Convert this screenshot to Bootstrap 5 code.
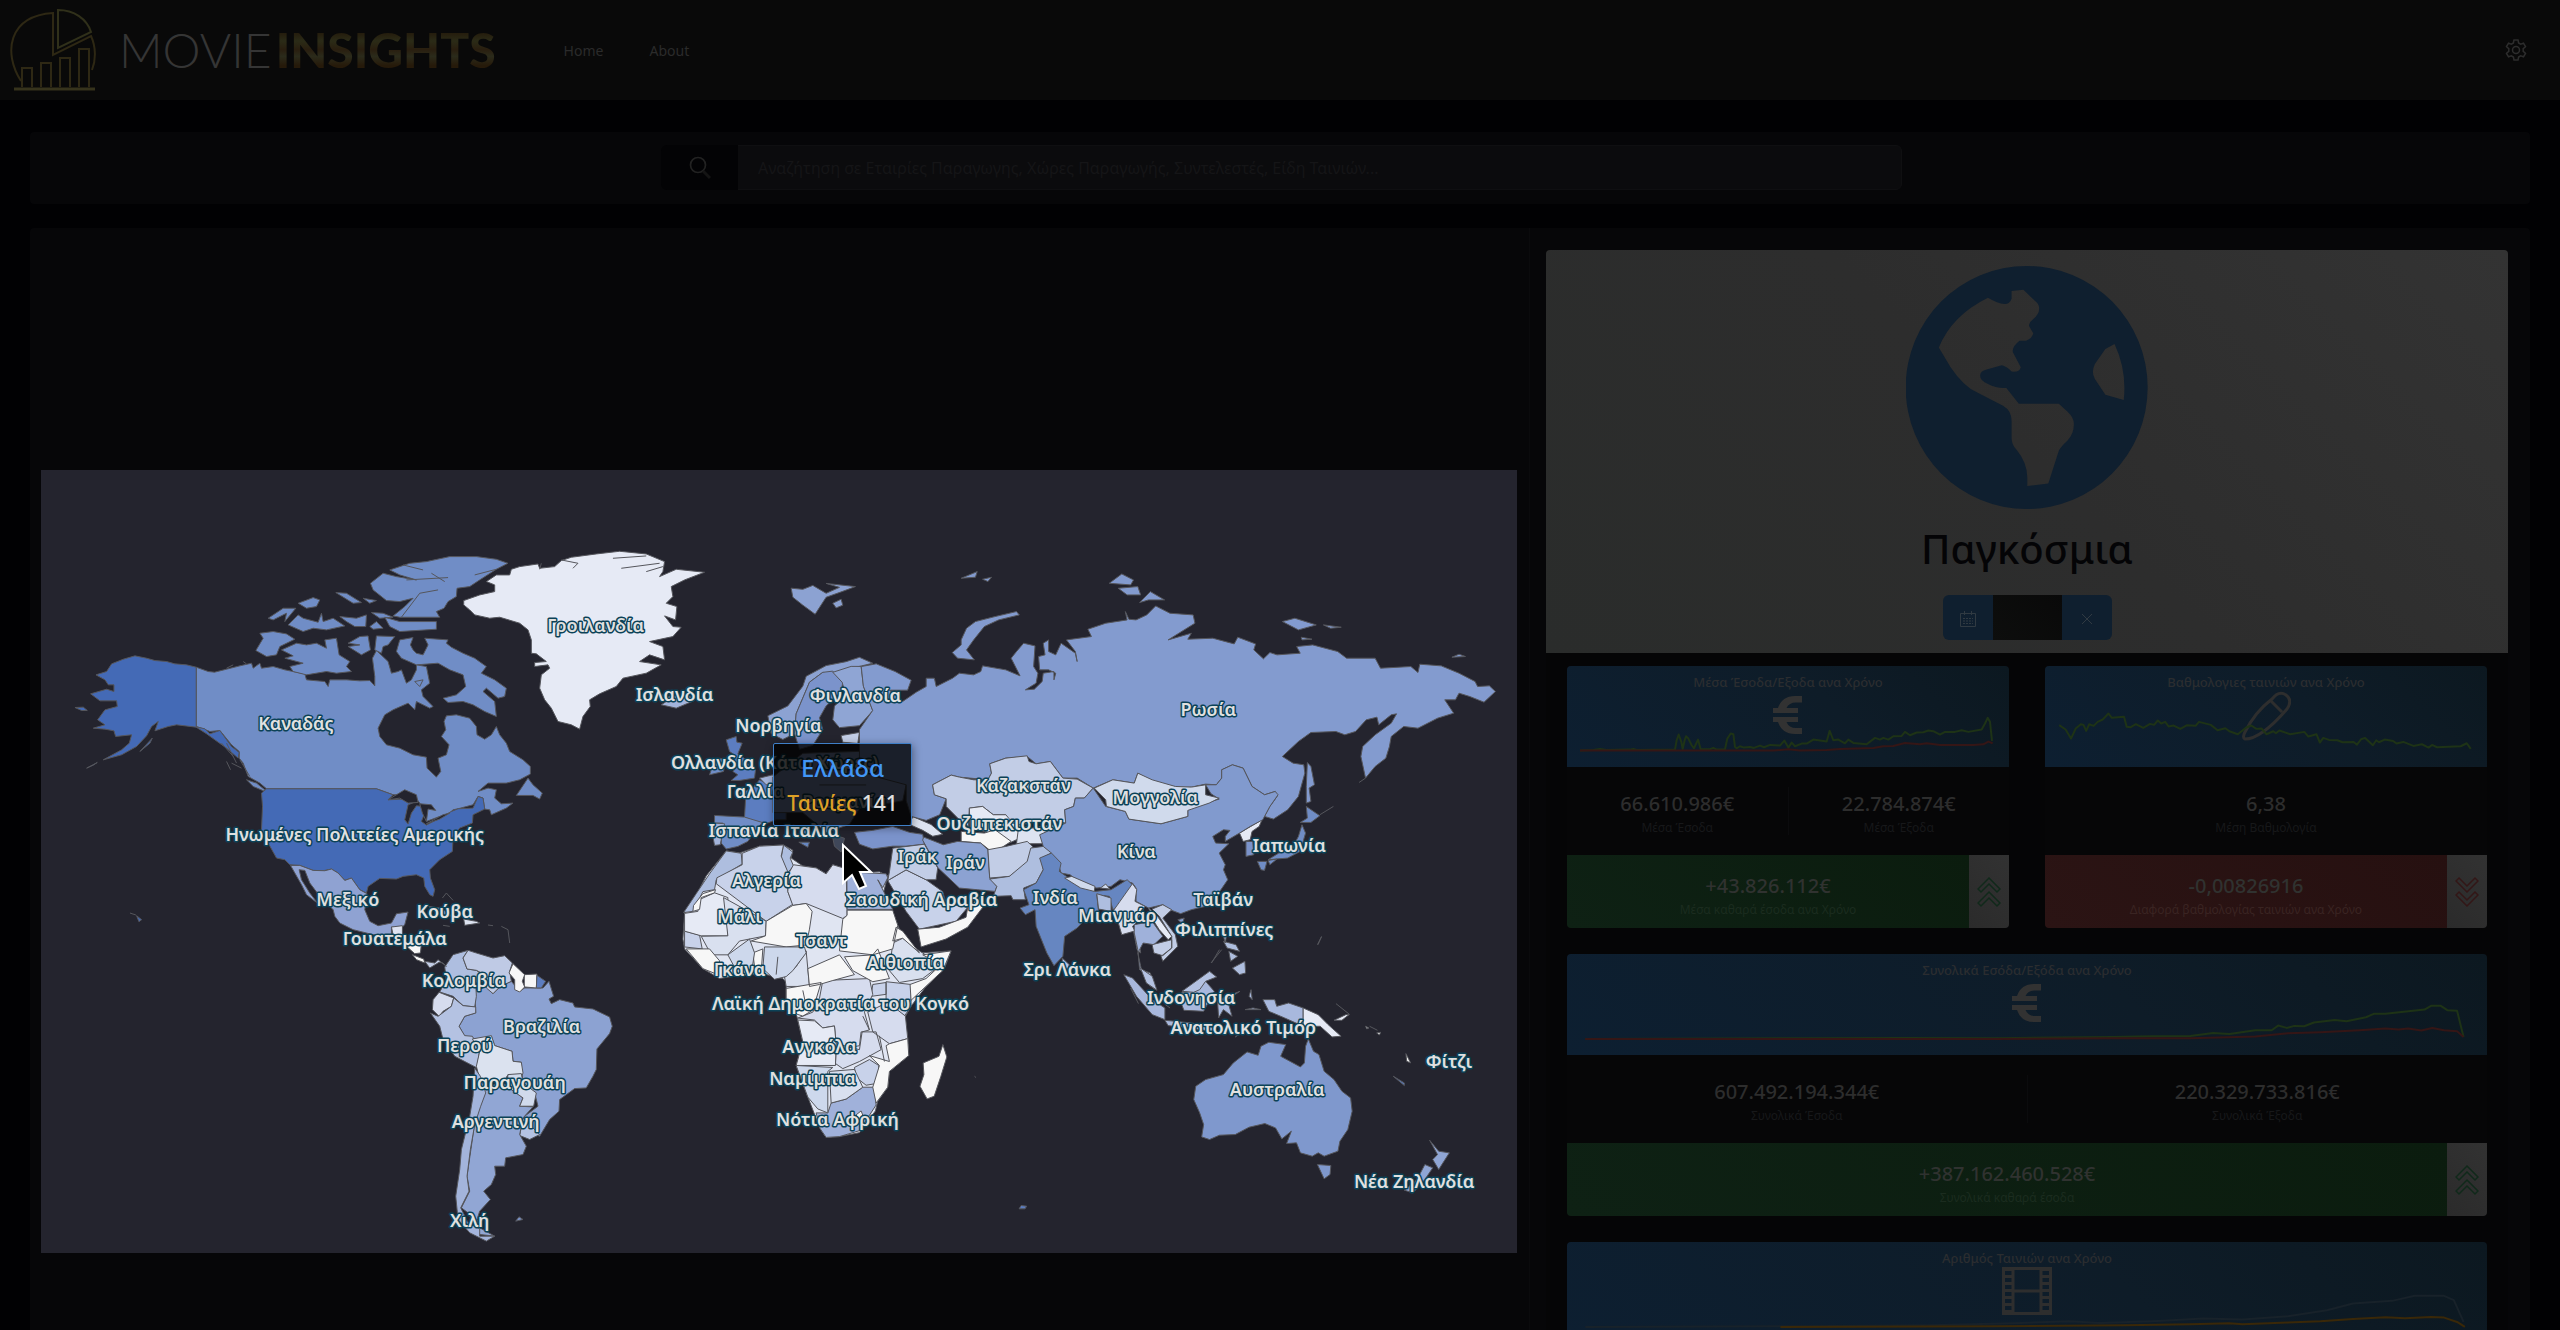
<!DOCTYPE html>
<html lang="el" data-bs-theme="dark">
<head>
<meta charset="utf-8">
<meta name="viewport" content="width=device-width, initial-scale=1">
<title>Movie Insights</title>
<link href="https://cdn.jsdelivr.net/npm/bootstrap@5.3.0/dist/css/bootstrap.min.css" rel="stylesheet">
<style>
body{background:#010103;color:#303030;font-family:"Noto Sans",sans-serif;font-size:14px}
.top-bar{background:#090909;height:100px;padding:0 32px 0 10px}
.brand-name{font:300 48px/60px Lato,sans-serif;color:#353535;margin-left:21px}
.brand-name b{font-weight:900;margin-left:4px;background:linear-gradient(#241b0c 20%,#2b2b17 35%,#291e0f 50%,#2b2b1b 62%,#261a0a 78%);-webkit-background-clip:text;background-clip:text;color:transparent}
.menu-links{margin-left:68px;gap:46px}
.menu-links a{color:#2b2b2b;text-decoration:none}
.panel{background:#060608;border-radius:4px;margin:0 30px}
.search-panel{height:72px;margin-top:32px;margin-bottom:24px;padding-top:13px}
.search-group{width:1241px;height:45px;margin-left:631px}
.search-group .btn{width:77px;background:#030305;color:#222;border:0}
.search-group .form-control{background:#0b0b0d;border:1px solid #0f0f11;color:#222;font-size:16px;padding-left:20px}
.search-group .form-control::placeholder{color:#151517;opacity:1}
.map-col{width:60%;padding:242px 12px 0 11px;border-right:1px solid #0a0a0c}
.info-col{width:40%;padding:22px 22px 0 16px}
.world-map{display:block;width:100%;background:#24242e}
.land path{stroke:#55565c;stroke-width:1;vector-effect:non-scaling-stroke;stroke-linejoin:round}
.names text{font:600 18px "Noto Sans",sans-serif;text-anchor:middle;fill:#e0e0e0;stroke:#0b4257;stroke-width:3px;paint-order:stroke;stroke-linejoin:round}
.map-tip{position:absolute;left:49.6%;top:34.9%;width:139px;height:83px;background:rgba(0,0,0,.8);border:1px solid #3f7fc8;border-radius:2px;box-shadow:1px 2px 8px rgba(0,0,0,.4);text-align:center;color:#e0e0e0;font:500 21px/34px "Noto Sans",sans-serif;padding-top:6px;white-space:nowrap}
.map-tip .land-name{color:#4296f5;font-size:24px;line-height:36px}
.map-tip .film-key{color:#dfa126}
.map-pointer{position:absolute;left:54.2%;top:47.5%}
.inner-col{background:#050506}
.world-card{background:linear-gradient(45deg,#2a2c2b,#2d2d2d 50%,#333);border-radius:4px 4px 0 0;height:403px;padding-top:16px}
.world-card h1{font-size:40px;line-height:48px;color:#040406;margin:16px 0 22px;font-weight:500}
.year-group{height:45px}
.year-group .btn{width:50px;background:#0f1f2f;color:#303a42;border:0;padding:0}
.year-group .year-box{width:70px;background:linear-gradient(45deg,#0d0e0d,#090909);border:0;border-radius:0;padding:0}
.stats{padding:13px 21px 0}
.stat-pair{gap:36px}
.stat-card{flex:1 1 0;border-radius:4px;overflow:hidden;margin-bottom:26px;background:#060607}
.chart-head{position:relative;height:101px;background:linear-gradient(45deg,#0d1f31,#0e1c28 60%,#0c1820);text-align:center;padding-top:7px}
.chart-head h2{font-size:13px;line-height:18px;font-weight:500;color:#2b2d30;margin:0}
.chart-head .trend{position:absolute;left:0;top:0;width:100%;height:100%}
.trend path{fill:none;stroke-width:2;vector-effect:non-scaling-stroke;stroke-linejoin:round}
.up{stroke:#1e3316}.down{stroke:#351616}.gold{stroke:#3a2808}.grey{stroke:#18222a}
.figures{height:88px;padding-top:20px}
.figures>div{flex:1;height:48px;text-align:center}
.figures>div+div{border-left:1px solid #0b0b0d}
.amount{font-size:20px;line-height:33px;font-weight:500;color:#2d2d2d}
.note{font-size:12px;line-height:16px;color:#17181a}
.result{height:73px;text-align:center}
.result .res-body{flex:1;padding-top:14px;background:linear-gradient(45deg,#0e2114,#0b1c0e)}
.result .note{color:#1b2c1f}
.result .amount{color:#303230}
.result.fall .res-body{background:linear-gradient(45deg,#2b1414,#261010)}
.result.fall .note{color:#3a2422}
.res-arrow{width:40px;background:linear-gradient(45deg,#2b2b2b,#323232);color:#10291a}
.fall .res-arrow{color:#331616}
</style>
<script src="https://cdn.jsdelivr.net/npm/bootstrap@5.3.0/dist/js/bootstrap.bundle.min.js"></script>
</head>
<body class="vh-100 overflow-hidden">
<header class="top-bar d-flex align-items-center">
  <svg width="88" height="84" viewBox="0 0 88 84" fill="none" stroke="#2e2814" stroke-width="2"><path d="M11 73C-7 45-2 8 43 5v42L81 28c5 11 5 24 1 34"/><path d="M48 2c16 0 29 9 33 22L48 40Z" stroke="#30301a"/><path d="M12 79V60h10v19M31 79V55h10v24M50 79V50h10v29M69 79V41h10v38"/><path d="M4 81h81" stroke="#36331c" stroke-width="3"/></svg>
  <div class="brand-name">MOVIE<b>INSIGHTS</b></div>
  <nav class="menu-links d-flex"><a href="#">Home</a><a href="#">About</a></nav>
  <a href="#" class="ms-auto" aria-label="Settings"><svg width="24" height="24" viewBox="0 0 24 24" fill="none" stroke="#2d2d2d" stroke-width="1.5"><path d="m10 2-.6 3-2 1.200-2.900-1-2 3.500L4.800 10.700v2.600l-2.300 2 2 3.500 2.900-1 2 1.200.6 3h4l.6-3 2-1.200 2.900 1 2-3.500-2.300-2v-2.600l2.300-2-2-3.500-2.900 1-2-1.200-.6-3Z"/><circle cx="12" cy="12" r="3.500"/></svg></a>
</header>

<section class="panel search-panel">
  <form class="input-group search-group">
    <button class="btn" type="button" aria-label="Αναζήτηση"><svg width="22" height="24" viewBox="0 0 22 24" fill="none" stroke="currentColor" stroke-width="1.700"><circle cx="9" cy="9" r="7.500"/><path d="m14 15 7 7" stroke-width="3" stroke="#141414"/></svg></button>
    <input class="form-control" type="text" aria-label="Αναζήτηση" placeholder="Αναζήτηση σε Εταιρίες Παραγωγης, Χώρες Παραγωγής, Συντελεστές, Είδη Ταινιών...">
  </form>
</section>

<main class="panel d-flex">
<section class="map-col">
<div class="position-relative">
<svg class="world-map" viewBox="41 470 1477 784">
<g class="land">
<g transform="translate(40 530) scale(.33333)" fill="#708dc6">
<path d="M469 412 505 425 524 427 560 418 600 408 635 400 640 415 660 400 665 415 700 410 735 420 795 432 800 450 855 455 865 470 870 450 920 450 960 453 990 452 1005 468 1005 440 998 385 1010 362 1045 395 1055 430 1075 425 1085 420 1100 460 1115 450 1130 420 1130 405 1160 410 1170 460 1145 480 1150 500 1180 530 1170 535 1130 515 1125 540 1105 520 1060 540 1035 555 1015 595 1020 620 1040 645 1080 655 1120 675 1160 682 1162 715 1190 742 1203 725 1195 685 1220 675 1228 645 1205 620 1218 600 1213 575 1220 558 1250 555 1290 565 1310 590 1312 615 1335 628 1355 615 1370 590 1380 615 1400 640 1410 665 1450 690 1472 710 1472 733 1440 750 1400 760 1345 760 1315 785 1345 775 1370 780 1365 805 1385 822 1420 820 1400 835 1355 855 1350 840 1335 838 1330 805 1315 800 1300 825 1255 837 1240 840 1225 855 1200 860 1160 875 1155 850 1140 820 1125 800 1100 795 1060 795 1010 777 680 777 660 760 625 740 610 700 598 685 598 665 575 645 540 602 510 605 490 597 469 590Z"/>
<path d="M1465 745 1430 797 1480 797 1500 808 1508 790 1480 765ZM1080 330 1120 323 1112 345 1120 360 1130 370 1150 375 1165 345 1155 325 1225 330 1220 340 1235 352 1270 370 1305 385 1340 410 1325 430 1365 450 1400 475 1395 500 1375 505 1340 475 1330 485 1365 515 1370 560 1335 545 1300 525 1270 515 1225 518 1210 505 1250 495 1278 470 1270 435 1230 420 1195 400 1130 405 1085 385 1070 365ZM725 360 770 340 800 345 830 340 860 355 855 330 890 325 898 375 930 395 920 410 935 425 890 430 860 425 800 435 760 425 750 410 790 400 735 385 760 378ZM660 310 700 305 740 312 765 328 720 350 710 375 680 380 648 362 670 325ZM925 340 960 320 985 318 992 360 965 375 925 350 960 345ZM1010 318 1065 320 1045 345 1030 350 1025 370 1005 360ZM1035 262 1080 275 1190 275 1190 298 1080 305 1050 290ZM995 248 1030 250 1060 262 1020 265ZM1050 120 1110 100 1160 95 1230 80 1310 80 1370 88 1405 100 1370 118 1320 150 1290 170 1252 175 1250 200 1225 215 1213 235 1190 245 1200 262 1080 262 1060 258 1095 230 1120 205 1080 215 1040 212 1000 180 992 160 1030 130 1070 140 1130 150 1080 135Z"/>
<path d="M745 285 775 255 790 265 835 277 845 250 850 275 880 265 915 288 860 300 820 295 790 305ZM685 265 730 235 768 235 735 275 740 250 700 270ZM775 220 820 203 840 210 830 230 800 235ZM888 188 920 190 965 218 940 220ZM900 260 950 265 980 255 978 290 945 290 920 275ZM990 290 1010 275 1030 295 1000 298ZM970 205 1010 212 990 220ZM620 750 650 760 687 790 640 770ZM1125 455 1150 450 1140 470Z"/>
<path d="M1100 150 1225 143M1085 262 1140 190 1195 180M1150 120 1090 105M1305 135 1370 118M1175 130 1215 155" fill="none"/>
<path fill="#446ab6" d="M665 790 680 777 1010 777 1060 795 1045 810 1090 808 1100 800 1130 815 1105 825 1095 870 1105 883 1115 850 1130 828 1150 830 1155 850 1145 875 1160 886 1200 865 1235 845 1255 837 1300 835 1315 800 1330 805 1335 838 1300 855 1298 880 1260 895 1240 920 1238 965 1200 990 1170 1020 1172 1045 1185 1080 1180 1100 1170 1095 1155 1070 1152 1045 1130 1035 1090 1040 1070 1048 1020 1046 985 1070 980 1090 960 1080 935 1045 915 1052 895 1030 875 1018 850 1023 820 1022 780 1007 750 1005 735 990 710 985 685 940 665 900 668 830ZM469 412 440 405 405 402 380 395 345 392 320 385 285 378 250 388 215 402 200 425 168 435 195 450 205 465 222 465 222 485 200 478 152 492 180 513 230 513 232 530 195 540 173 570 195 585 160 595 195 598 222 603 227 620 275 615 268 640 245 660 190 690 245 675 290 650 320 618 335 590 355 575 345 603 385 590 410 585 469 592 500 612 525 630 560 655 595 685 598 668 575 650 540 602 510 612 495 597 469 591ZM300 665 337 625 330 640ZM105 533 130 532 142 542 125 542ZM140 715 172 698 160 706ZM290 1158 305 1170 297 1176Z"/>
<path fill="#24242e" d="M1045 810 1095 780 1130 795 1135 818 1105 820 1080 805ZM1140 822 1175 825 1188 842 1165 838 1160 875 1148 850ZM1160 882 1210 855 1230 850 1200 868Z"/>
<path fill="#8fa2d2" d="M752 1007 780 1007 820 1022 855 1023 875 1018 895 1030 915 1052 935 1045 960 1080 982 1092 975 1140 990 1175 1015 1188 1055 1180 1070 1152 1105 1147 1095 1185 1085 1195 1055 1192 1055 1215 1000 1215 940 1200 900 1180 885 1160 880 1140 840 1100 810 1060 795 1022 778 1020 785 1050 810 1090 835 1122 800 1095 785 1065ZM1165 1130 1200 1135 1255 1165 1225 1160Z"/>
<path fill="#dde3f1" d="M1055 1192 1088 1188 1088 1215 1060 1215ZM1272 1168 1310 1175 1320 1180 1275 1187Z"/>
<path d="M1208 1105 1220 1090 1240 1112M1345 1186 1360 1188M1385 1190 1405 1200 1410 1240M1210 1187 1230 1190M270 1150 288 1156M545 640 580 680M560 640 590 700M575 700 605 715M560 695 572 720M600 690 630 740M610 395 620 402M560 415 580 405" fill="none"/>
</g>
<g transform="translate(500 530) scale(.33333)">
<path fill="#e6eaf5" d="M-108 212-60 195-15 185-15 165-40 155-10 135 30 135 35 118 60 110 115 102 120 115 165 110 185 92 215 82 290 72 360 64 440 72 495 95 490 125 480 140 530 118 615 127 555 150 515 170 520 200 500 220 532 230 528 270 495 258 520 290 545 292 520 320 450 335 490 350 495 390 450 375 420 395 485 405 440 430 370 445 350 470 300 492 270 510 272 530 250 560 240 598 215 585 175 575 155 535 135 510 120 475 125 435 150 415 145 405 105 410 105 398 140 395 110 372 95 370 95 330 85 300 60 280 0 262-30 265-75 255-90 240-108 225Z"/>
<path d="M185 90 235 100 220 115M340 85 440 78M365 115 480 100M120 118 125 100M440 125 490 110" fill="none"/>
<path fill="#a3b4db" d="M485 525 500 515 480 490 505 500 560 490 585 512 530 535Z"/>
<path fill="#5c7dc0" d="M680 630 710 620 712 637 728 640 715 672 740 690 750 712 768 720 765 745 720 752 695 752 715 735 700 725 712 712 700 695 705 675 690 665ZM735 862 738 810 720 790 760 775 780 750 820 770 860 800 860 870 830 870 790 885Z"/>
<path fill="#708dc6" d="M630 735 640 705 660 685 678 690 672 725ZM645 857 735 862 788 878 770 900 745 935 715 950 680 958 665 940 670 880 645 880Z"/>
<path fill="#a3b4db" d="M645 880 675 882 662 945 645 947 640 920ZM780 745 820 735 830 765 800 765Z"/>
</g>
<g transform="translate(380 880) scale(.33333)">
<path fill="#8ca2d2" d="M285 335 320 320 340 342 362 320 395 305 420 335 435 325 470 325 490 325 508 305 522 350 508 358 515 372 540 360 580 370 585 382 640 388 690 412 698 440 690 462 652 508 650 570 640 590 620 625 585 627 540 660 538 695 510 720 480 770 420 745 435 710 475 680 465 640 430 610 425 570 425 548 400 545 397 515 345 498 335 470 290 478 255 470 238 440 255 410 288 400Z"/>
<path fill="#aebee0" d="M265 212 250 235 262 268 290 272 315 290 318 305 288 310 290 350 285 382 250 378 220 350 180 337 200 300 195 262 220 225Z"/>
<path fill="#bfcae5" d="M265 212 290 220 340 235 375 228 398 250 390 275 395 305 362 320 340 342 320 325 315 285 290 272 262 268 250 235Z"/>
<path fill="#f7f7f7" d="M400 252 435 285 472 283 470 325 435 322 420 337 405 330 405 300 388 280ZM435 285 428 305 435 322M80 200 125 192 122 220 105 222ZM98 225 132 238 135 250 110 240Z"/>
<path fill="#5c7dc0" d="M472 287 498 305 485 325 470 325Z"/>
<path fill="#c2cde6" d="M135 245 165 250 175 240 200 260 190 250 178 248 150 265Z"/>
<path fill="#d6dcee" d="M178 338 222 355 215 380 190 395 178 410 158 390 160 360Z"/>
<path fill="#b4c2e2" d="M222 355 250 378 288 382 288 400 255 410 238 440 255 468 278 470 300 510 292 565 225 530 190 480 180 440 152 400 175 410 215 380ZM430 715 480 765 450 780 420 768Z"/>
<path fill="#dbe2ef" d="M278 478 335 468 345 498 397 515 400 545 425 548 430 580 425 595 385 585 370 610 300 600 290 560 300 515Z"/>
<path fill="#91a6d4" d="M300 600 318 620 370 610 430 655 420 680 460 682 430 715 420 765 440 800 430 825 378 835 375 860 345 860 348 885 335 915 312 935 332 960 300 995 292 1020 300 1045 345 1070 300 1065 265 1000 245 985 270 935 262 890 275 800 285 730 300 680Z"/>
<path fill="#d0daec" d="M385 585 425 582 430 610 470 640 462 680 420 680 430 655 380 620Z"/>
<path fill="#a3b4db" d="M285 565 302 590 318 640 303 680 285 735 272 810 262 890 268 935 243 985 265 1030 300 1048 300 1070 345 1070 320 1085 270 1060 235 1020 228 950 240 870 245 810 270 710 280 650Z"/>
<path fill="#7b93cb" d="M408 1025 418 1012 430 1020Z"/>
</g>
<g transform="translate(660 540) scale(.33333 .3954)">
<path fill="#8ca2d2" d="M395 122 430 125 460 115 500 135 540 120 500 110 588 118 550 130 500 145 467 188 430 165 400 145ZM520 160 545 150 550 165 530 172ZM325 445 385 420 430 370 440 345 500 318 560 308 600 297 640 312 600 320 560 330 520 340 490 335 450 360 430 400 410 440 405 490 370 505 335 490Z"/>
<path fill="#7b93cb" d="M410 440 430 400 450 360 490 335 520 332 550 360 545 385 500 420 480 450 490 480 460 520 420 530 405 490ZM585 740 640 735 700 725 750 740 790 745 795 770 740 775 700 775 640 782 600 770Z"/>
<path fill="#8fa5d4" d="M520 335 575 320 605 320 612 370 640 432 600 470 540 475 520 455 525 420 560 395 548 360ZM340 600 430 540 600 535 740 620 730 660 600 680 570 720 500 740 430 690 340 690Z"/>
<path fill="#c2cde6" d="M545 495 600 487 595 515 550 512Z"/>
<path fill="#e0e5f2" d="M200 787 240 792 300 775 372 772 400 785 395 805 430 825 470 830 500 845 520 822 555 832 600 842 660 840 685 850 670 900 700 945 720 985 770 1035 785 1045 875 1040 855 1085 800 1130 755 1180 735 1210 745 1262 748 1305 690 1345 685 1385 655 1420 648 1445 600 1500 540 1510 500 1512 482 1490 445 1410 410 1330 430 1270 412 1205 380 1165 380 1120 370 1110 320 1100 250 1100 180 1110 130 1085 75 1035 70 1010 75 945 110 900 140 850Z"/>
<path fill="#aebedf" d="M200 787 245 793 248 820 170 860 165 885 130 890 100 940 72 943 110 895 150 845ZM372 772 400 790 392 805 402 825 385 842 365 805Z"/>
<path fill="#c8d2ea" d="M248 793 300 775 372 772 365 800 385 840 385 890 400 922 320 965 170 870 172 855 248 822ZM75 990 120 1000 128 1035 75 1030ZM680 1118 755 1125 755 1180 735 1205 680 1165ZM640 1125 680 1120 680 1150 635 1155ZM585 1335 630 1315 658 1330 655 1375 620 1380 590 1360Z"/>
<path fill="#d6dcee" d="M402 822 470 830 500 845 520 822 560 832 563 950 550 958 440 920 400 925 385 890 387 845ZM490 1115 630 1110 640 1150 615 1195 630 1240 608 1245 600 1290 530 1275 525 1230 490 1235 465 1215 415 1210 460 1195 480 1160ZM625 1195 685 1170 738 1205 745 1262 690 1275 640 1245ZM530 1290 600 1280 605 1245 650 1245 665 1290 600 1320 550 1338 528 1325Z"/>
<path fill="#a0b1da" d="M562 832 610 842 680 845 685 855 670 880 655 860 700 935 563 935ZM505 1450 515 1425 560 1415 610 1385 645 1385 650 1430 600 1495 540 1510 500 1512 482 1490 470 1450Z"/>
<path fill="#e6eaf5" d="M75 945 115 940 120 910 165 893 205 905 205 1002 125 1002 75 990ZM415 1215 465 1217 490 1235 525 1230 530 1275 528 1330 410 1330 430 1270Z"/>
<path fill="#d9e0ef" d="M192 905 320 965 318 1002 240 1015 205 1050 155 1050 125 1003 205 1002ZM700 1020 730 1008 780 1040 845 1075 790 1110 720 1120 690 1090ZM440 1040 450 1130 380 1130 375 1105 410 1080ZM510 1345 585 1340 610 1385 560 1415 515 1425Z"/>
<path fill="#f7f7f7" d="M320 965 400 925 440 920 458 940 450 985 440 1025 380 1030 275 1015 318 1002ZM563 937 700 937 715 975 700 1035 640 1050 540 1040 550 960 563 950ZM555 1055 640 1050 655 1035 690 1110 640 1118 580 1090ZM80 1035 150 1035 180 1065 175 1100 130 1085ZM280 1045 310 1035 305 1095 288 1100ZM445 1085 540 1050 585 1100 520 1115 480 1125 450 1130ZM380 1135 485 1120 460 1190 430 1205 412 1200 380 1165ZM710 980 730 990 780 1045 730 1008 700 1015ZM790 1050 875 1040 850 1090 755 1165 752 1125 800 1110 845 1075ZM690 1275 745 1262 748 1305 690 1345 685 1385 650 1425 640 1385 660 1330 630 1305 690 1320 680 1280ZM102 925 130 895 168 885 165 893 125 905 120 935 100 940ZM590 1455 605 1445 612 1460 600 1470Z"/>
<path fill="#cdd8ec" d="M315 1030 435 1030 440 1045 400 1090 380 1105 345 1112 310 1085ZM205 1050 270 1010 285 1045 275 1100 240 1105ZM410 1330 520 1335 505 1345 505 1450 475 1440 445 1410Z"/>
<path fill="#c8d2ea" d="M685 862 740 835 800 860 850 890 860 920 925 930 890 965 780 985 740 940Z"/>
<path fill="#f7f7f7" d="M775 985 840 980 920 955 925 930 960 905 970 930 925 980 860 1010 785 1030Z"/>
<path fill="#c2cde6" d="M700 780 795 770 835 830 830 860 800 860 740 835 685 862 690 840Z"/>
<path fill="#dde3f1" d="M760 700 815 720 850 745 820 750 790 735 750 720Z"/>
<path fill="#3f4759" d="M518 745 555 755 545 790 525 775Z"/><path fill="#6686c1" d="M418 765 450 765 445 778ZM400 720 450 735 455 755 430 740Z"/>
<path fill="none" d="M610 1205 630 1240M660 1255 675 1320M430 1140 440 1180M355 1055 350 1100M480 620 620 620M520 560 600 580"/>
</g>
<g transform="translate(960 540) scale(.35714 .33333)">
<path fill="#839bcf" d="M-275 380-233 372-180 395-135 421-145 451-196 451-159 485-121 457-93 440-93 415-70 415-65 440-19 415 0 400 40 405 60 395 65 378 130 390 170 408 145 355 160 335 180 310 212 318 208 380 220 400 215 430 185 450 210 448 232 425 235 400 265 395 265 420 270 400 250 390 225 390 222 350 240 345 235 310 250 300 250 335 270 345 285 310 325 340 330 365 325 335 300 300 370 290 360 268 410 250 470 240 465 215 475 238 495 240 525 225 550 198 590 220 655 225 660 250 585 300 650 280 640 298 710 295 770 312 780 292 830 312 825 330 852 357 870 338 890 345 955 340 945 320 990 315 1060 335 1085 355 1165 355 1180 385 1265 380 1285 398 1290 373 1350 378 1400 400 1445 425 1452 440 1485 438 1502 455 1470 487 1430 470 1400 460 1390 480 1360 480 1385 520 1340 535 1285 565 1245 560 1210 590 1205 620 1195 655 1165 680 1138 715 1125 650 1130 620 1165 585 1210 550 1225 522 1210 525 1175 555 1170 532 1140 540 1110 575 1080 585 1055 575 985 578 950 605 905 650 935 670 965 675 968 700 950 770 920 810 880 838 855 830 870 800 890 770 885 755 855 765 820 740 795 685 765 675 735 690 735 715 720 735 690 733 650 742 605 742 540 725 500 700 490 730 430 720 375 745 330 715 290 715 255 665 215 672 190 650 130 655 85 672 90 700 80 720 0 712-23 706-75 735-70 765-37 777-55 825-93 842-135 830-149 783-149 735-233 711-280 664-280 569-243 512-269 439Z"/>
<path fill="#839bcf" d="M5 300 20 265 45 245 100 230 160 215 168 225 110 240 70 260 40 300 20 330 42 360-5 355-20 338 5 315ZM420 130 455 102 488 120 480 135ZM445 145 500 140 508 165 470 165ZM505 188 535 155 575 180 530 180ZM905 245 940 235 1000 255 950 270ZM1020 255 1070 262 1040 265ZM958 292 988 298 960 300ZM1380 352 1400 343 1418 350ZM5 115 50 95 45 112ZM65 118 90 112 80 125ZM975 668 985 680 995 735 980 745 985 785 972 790 972 740Z"/>
<path fill="#c2cde6" d="M85 672 130 655 190 648 195 665 215 672 255 665 290 715 330 718 375 745 350 775 325 775 320 800 295 810 298 850 240 840 200 850 150 860 130 825 95 825 65 800 28 805 25 860 0 840-37 800-37 777-70 765-75 735-23 706 0 712 40 720 80 720 90 700Z"/>
<path fill="#e6eaf5" d="M28 805 65 800 95 825 130 825 150 850 220 870 160 900 140 910 90 880 30 865ZM785 880 848 840 840 860 820 875 815 900 795 905Z"/>
<path fill="#f7f7f7" d="M5 875 70 880 100 870 145 905 95 940 60 910 5 905Z"/>
<path fill="#dde3f1" d="M165 870 205 865 290 850 298 855 240 880 235 912 160 912Z"/>
<path fill="#819ace" d="M375 745 410 800 465 815 475 838 565 852 640 830 640 810 690 790 728 778 705 762 690 735 720 735 735 715 735 690 765 675 795 685 820 740 855 765 885 755 893 765 870 800 850 840 815 860 785 880 745 905 745 890 758 872 740 870 710 890 718 910 755 912 728 940 745 975 740 990 752 1020 720 1070 690 1100 650 1110 620 1122 590 1110 570 1095 530 1105 495 1085 495 1045 485 1030 450 1020 425 1040 385 1045 345 1035 310 1005 285 1000 275 965 235 920 225 885 298 850 295 810 320 800 325 775 350 775ZM612 1140 630 1135 625 1152ZM735 1090 748 1080 740 1110Z"/>
<path fill="#d0daec" d="M378 745 430 720 490 730 500 700 540 720 605 740 650 742 690 735 690 765 728 775 700 790 640 812 640 830 565 852 475 838 465 815 412 800 410 780Z"/>
<path fill="#8ca2d2" d="M-100 892-45 915-5 905 60 910 80 930 85 1015 105 1040 100 1055 50 1050 0 1045-60 984-103 901Z"/>
<path fill="#c2cde6" d="M80 930 130 920 190 905 205 920 190 970 140 1010 85 1015Z"/>
<path fill="#aebedf" d="M85 1018 140 1010 190 965 200 925 235 920 258 940 230 955 235 990 215 1030 180 1045 185 1080 150 1080 145 1068 95 1070 105 1040Z"/>
<path fill="#6686c1" d="M225 955 258 940 285 970 280 995 300 1010 340 1040 380 1055 425 1050 470 1020 485 1035 455 1090 430 1110 420 1070 385 1065 390 1115 365 1125 330 1165 295 1190 290 1250 265 1278 245 1240 215 1160 212 1110 185 1125 170 1105 195 1095 180 1050 215 1030 235 990Z"/>
<path fill="#d0daec" d="M295 1015 315 1010 380 1040 378 1055 340 1045ZM395 1045 410 1033 422 1048Z"/>
<path fill="#aebedf" d="M385 1062 425 1075 425 1115 390 1108ZM510 1290 535 1300 550 1350 530 1335ZM733 1160 748 1190 745 1210ZM740 1205 775 1215 785 1235 750 1225ZM765 1285 800 1265 802 1300 785 1305ZM755 1235 780 1250 760 1265Z"/>
<path fill="#d6dcee" d="M485 1032 497 1050 492 1085 520 1100 495 1150 485 1160 500 1190 508 1240 498 1230 488 1175 455 1185 440 1130 430 1115 450 1085Z"/>
<path fill="#9fb1da" d="M490 1155 540 1145 570 1190 545 1215 515 1210 500 1240 510 1290 530 1305 505 1290 500 1230 490 1180Z"/>
<path fill="#c2cde6" d="M540 1108 570 1095 595 1110 570 1135 605 1185 612 1220 570 1265 565 1250 595 1225 595 1190 560 1130ZM540 1215 595 1200 595 1225 570 1248 545 1240Z"/>
<path fill="#e6eaf5" d="M530 1105 555 1130 595 1190 585 1200 560 1170 545 1145Z"/>
<path fill="#7b93cb" d="M803 905 822 905 825 945 803 950Z"/>
<path fill="#708dc6" d="M955 848 975 835 972 800 1010 828 985 848ZM960 855 970 880 955 935 920 955 865 960 895 940 935 920 950 890ZM835 965 862 965 855 992 845 990ZM865 962 890 958 870 975Z"/>
<path fill="none" d="M1010 825 1048 800M1120 728 1138 715M705 1270 735 1230M1005 1215 1015 1190"/>
</g>
<g transform="translate(900 900) scale(.39535 .33333)">
<path fill="#a8b8dd" d="M568 225 590 235 640 300 672 325 672 360 640 345 600 290ZM672 362 740 370 800 385 790 395 680 378ZM715 278 750 275 775 245 797 275 770 335 720 332 710 300ZM805 300 830 290 862 275 830 300 842 350 820 330 808 355ZM920 300 950 300 955 320 985 310 1022 325 1022 380 975 355 935 335ZM875 330 915 330 895 325ZM890 270 893 300 885 290ZM850 412 865 400 855 408Z"/>
<path fill="#b4c2e2" d="M715 275 785 215 803 232 775 245 760 270 745 278ZM610 205 640 230 652 272 625 250ZM412 175 430 195 425 210 412 200Z"/>
<path fill="#e6eaf5" d="M1022 325 1060 345 1085 375 1118 410 1095 412 1065 380 1022 380ZM1100 362 1130 345 1138 345 1120 362Z"/>
<path fill="#7f98cd" d="M1035 418 1048 455 1062 465 1075 515 1100 540 1120 575 1142 595 1146 635 1135 690 1115 725 1110 755 1075 770 1060 760 1045 770 1015 760 1005 730 980 732 992 695 968 718 952 685 925 672 885 683 850 705 810 707 785 720 765 712 770 675 760 640 745 600 750 560 775 540 820 525 845 490 880 457 908 467 915 440 935 428 978 435 965 470 1015 502 1025 490 1028 440ZM1058 795 1092 798 1090 825 1075 838Z"/>
<path fill="#8fa5d4" d="M1342 722 1365 755 1392 760 1365 810 1350 780 1362 765ZM1330 795 1350 805 1330 840 1300 880 1278 872 1310 840Z"/>
<path fill="#f7f7f7" d="M110 435 120 472 105 530 88 590 70 598 52 560 62 525 60 490 100 470ZM1282 462 1294 490 1284 485ZM1180 380 1188 385 1183 388ZM1208 400 1218 398 1215 406Z"/>
<path fill="#5c7dc0" d="M1250 530 1278 550 1278 558ZM308 918 322 920 318 928 303 928Z"/>
<path fill="none" d="M1105 312 1140 345M1190 380 1210 392M585 265 605 312M790 190 810 150M1058 135 1068 112M673 315 685 325M190 530 194 534"/>
</g>
</g>
<g class="names">
<text x="296" y="730">Καναδάς</text><text x="355" y="841">Ηνωμένες Πολιτείες Αμερικής</text><text x="348" y="906">Μεξικό</text><text x="445" y="918">Κούβα</text><text x="395" y="945">Γουατεμάλα</text>
<text x="596" y="632">Γροιλανδία</text><text x="675" y="701">Ισλανδία</text><text x="756" y="798">Γαλλία</text><text x="779" y="732">Νορβηγία</text><text x="856" y="702">Φινλανδία</text><text x="775" y="769">Ολλανδία (Κάτω Χώρες)</text><text x="845" y="808">Ρουμανία</text><text x="744" y="837">Ισπανία</text><text x="812" y="837">Ιταλία</text>
<text x="767" y="887">Αλγερία</text><text x="740" y="923">Μάλι</text><text x="822" y="947">Τσαντ</text><text x="740" y="976">Γκάνα</text><text x="906" y="969">Αιθιοπία</text><text x="841" y="1010">Λαϊκή Δημοκρατία του Κογκό</text><text x="820" y="1053">Ανγκόλα</text><text x="813" y="1085">Ναμίμπια</text><text x="838" y="1126">Νότια Αφρική</text>
<text x="918" y="863">Ιράκ</text><text x="966" y="869">Ιράν</text><text x="922" y="906">Σαουδική Αραβία</text><text x="1209" y="716">Ρωσία</text><text x="1024" y="792">Καζακστάν</text><text x="1156" y="804">Μογγολία</text><text x="1000" y="830">Ουζμπεκιστάν</text><text x="1137" y="858">Κίνα</text><text x="1290" y="852">Ιαπωνία</text><text x="1224" y="906">Ταϊβάν</text><text x="1056" y="904">Ινδία</text><text x="1118" y="922">Μιανμάρ</text><text x="1225" y="936">Φιλιππίνες</text><text x="1068" y="976">Σρι Λάνκα</text>
<text x="1192" y="1004">Ινδονησία</text><text x="1244" y="1034">Ανατολικό Τιμόρ</text><text x="1278" y="1096">Αυστραλία</text><text x="1450" y="1068">Φίτζι</text><text x="1415" y="1188">Νέα Ζηλανδία</text>
<text x="464" y="987">Κολομβία</text><text x="542" y="1033">Βραζιλία</text><text x="465" y="1052">Περού</text><text x="515" y="1089">Παραγουάη</text><text x="496" y="1128">Αργεντινή</text><text x="470" y="1228">Χιλή</text>
</g>
</svg>
<div class="map-tip"><div class="land-name">Ελλάδα</div><span class="film-key">Ταινίες</span> 141</div>
<svg class="map-pointer" width="32" height="50" viewBox="0 0 32 50"><path d="M2 3v38l9-8 7 14 7-3-6-14h11Z" fill="#000" stroke="#fff" stroke-width="2"/></svg>
</div>
</section>

<section class="info-col">
<div class="inner-col">
<div class="world-card text-center">
  <svg width="242" height="243" viewBox="572 137 369 727" preserveAspectRatio="none" class="d-block mx-auto"><path fill="#0f1f2f" fill-rule="evenodd" d="M756 137A184.500 363.500 0 1 1 756 864A184.500 363.500 0 1 1 756 137ZM697 232Q642 285 622 381L640 440Q660 498 680 515L720 555Q733 570 733 600V650Q733 672 740 685Q757 725 757 770V795L789 788L805 690Q808 678 818 660Q828 640 828 610Q828 590 818 572L805 549H744L725 502Q710 504 697 490Q685 480 685 465Q685 452 695 447L718 434Q725 436 733 453Q745 456 747 440L735 395Q733 380 745 361H755Q765 352 766 338L760 318Q758 308 765 298Q776 280 775 262Q775 250 768 240L751 208L733 212V235Q730 252 722 251Q712 250 697 232ZM890 370L876 385L860 430Q854 455 860 475L876 522L904 538Q909 450 890 370Z"/></svg>
  <h1>Παγκόσμια</h1>
  <div class="year-group btn-group">
    <button class="btn" aria-label="Ημερολόγιο"><svg width="16" height="16" viewBox="0 0 16 16" fill="none" stroke="currentColor"><path d="M.5 2.500h15v13H.5ZM4.500 0v4M11.500 0v4"/><path d="M3 7.500h10M3 10h10M3 12.500h10" stroke-dasharray="2 1"/></svg></button>
    <input class="year-box" type="text" aria-label="Έτος">
    <button class="btn" aria-label="Καθαρισμός"><svg width="12" height="12" viewBox="0 0 12 12" stroke="currentColor"><path d="m1 1 10 10M11 1 1 11"/></svg></button>
  </div>
</div>
<div class="stats">
<div class="stat-pair d-flex">
  <article class="stat-card">
    <div class="chart-head">
      <svg class="trend" viewBox="81 48 1326 302" preserveAspectRatio="none"><path class="up" d="M120 301 160 299 180 296 200 299 270 298 280 296 290 299 405 298 410 270 416 253 424 275 428 296 434 270 438 258 445 265 455 285 462 294 474 268 482 297 510 297 520 293 530 298 555 297 562 265 572 250 580 252 585 290 590 294 600 288 612 292 630 290 642 293 660 286 672 291 690 284 720 286 733 271 745 292 755 277 765 288 785 280 800 280 820 268 860 274 869 242 880 270 895 268 915 279 925 268 940 278 980 282 1005 263 1020 268 1030 263 1045 268 1060 258 1085 257 1095 245 1110 255 1130 247 1150 246 1165 241 1180 243 1200 253 1215 245 1245 245 1265 240 1285 245 1325 238 1335 220 1343 203 1350 215 1356 272"/><path class="down" d="M120 301 700 301 745 297 780 301 860 299 900 296 1000 293 1030 288 1060 287 1095 278 1140 282 1160 279 1200 284 1300 284 1330 282 1345 274 1358 279"/></svg>
      <h2>Μέσα Έσοδα/Εξοδα ανα Χρόνο</h2>
      <svg width="30" height="40" viewBox="0 0 30 40" fill="#323232" class="mt-1"><path d="M29 1v6.500h-6q-7 0-9.500 5.500H25v5H0v-5h5Q9 1 22 1ZM0 22h25v5H13.500q2.500 6 9.500 6h6v6h-7Q9 39 5 27H0Z"/></svg>
    </div>
    <div class="figures d-flex"><div><div class="amount">66.610.986€</div><div class="note">Μέσα Έσοδα</div></div><div><div class="amount">22.784.874€</div><div class="note">Μέσα Έξοδα</div></div></div>
    <div class="result d-flex"><div class="res-body"><div class="amount">+43.826.112€</div><div class="note">Μέσα καθαρά έσοδα ανα Χρόνο</div></div><div class="res-arrow d-flex align-items-center justify-content-center"><svg width="24" height="32" viewBox="0 0 24 32" fill="none" stroke="currentColor" stroke-width="1.500"><path d="M12 2 23 13l-3 3-8-8-8 8-3-3ZM12 16l11 11-3 3-8-8-8 8-3-3Z"/></svg></div></div>
  </article>
  <article class="stat-card">
    <div class="chart-head">
      <svg class="trend" viewBox="44 48 1309 302" preserveAspectRatio="none"><path class="up" d="M86 225 105 238 121 265 135 235 150 222 158 224 166 242 175 222 188 227 200 215 215 208 232 190 242 203 278 200 286 230 298 231 313 222 335 233 355 221 367 224 378 211 388 220 400 215 410 229 425 226 445 236 465 225 490 227 500 215 535 224 555 240 578 234 590 243 615 252 640 232 655 226 670 236 685 235 700 252 720 243 728 249 738 241 770 252 812 245 824 259 848 252 858 277 868 263 885 269 910 270 925 276 958 275 968 283 980 267 992 263 1015 285 1025 270 1033 276 1050 268 1075 272 1085 280 1105 275 1135 287 1160 282 1180 292 1190 284 1205 291 1275 288 1293 279 1305 296"/></svg>
      <h2>Βαθμολογιες ταινιών ανα Χρόνο</h2>
      <svg width="50" height="50" viewBox="0 0 50 50" fill="none" stroke="#2e2e2e" stroke-width="3"><path d="M31 8Q38-1 45 4t1 14Q20 48 4 48 1 47 4 41 14 21 31 8ZM30 10l11 11"/></svg>
    </div>
    <div class="figures d-flex"><div><div class="amount">6,38</div><div class="note">Μέση Βαθμολογία</div></div></div>
    <div class="result fall d-flex"><div class="res-body"><div class="amount">-0,00826916</div><div class="note">Διαφορά βαθμολογίας ταινιών ανα Χρόνο</div></div><div class="res-arrow d-flex align-items-center justify-content-center"><svg width="24" height="32" viewBox="0 0 24 32" fill="none" stroke="currentColor" stroke-width="1.500"><path d="m12 16 11-11-3-3-8 8-8-8-3 3ZM12 30l11-11-3-3-8 8-8-8-3 3Z"/></svg></div></div>
  </article>
</div>
<article class="stat-card">
  <div class="chart-head">
    <svg class="trend" viewBox="42 42 1414 302" preserveAspectRatio="none"><path class="up" d="M70 296 410 294 560 293 700 294 880 290 940 288 1000 287 1035 278 1060 281 1100 270 1125 270 1135 256 1148 263 1160 257 1175 258 1190 247 1222 239 1240 243 1270 231 1282 221 1300 221 1360 208 1370 197 1385 197 1395 210 1410 212 1420 290"/><path class="down" d="M70 296 700 296 880 294 1000 294 1100 289 1150 279 1200 276 1260 270 1300 265 1320 268 1335 265 1355 271 1372 263 1390 270 1410 273 1420 290"/></svg>
    <h2>Συνολικά Εσόδα/Εξόδα ανα Χρόνο</h2>
    <svg width="30" height="40" viewBox="0 0 30 40" fill="#323232" class="mt-1"><path d="M29 1v6.500h-6q-7 0-9.500 5.500H25v5H0v-5h5Q9 1 22 1ZM0 22h25v5H13.500q2.500 6 9.500 6h6v6h-7Q9 39 5 27H0Z"/></svg>
  </div>
  <div class="figures d-flex"><div><div class="amount">607.492.194.344€</div><div class="note">Συνολικά Έσοδα</div></div><div><div class="amount">220.329.733.816€</div><div class="note">Συνολικά Έξοδα</div></div></div>
  <div class="result d-flex"><div class="res-body"><div class="amount">+387.162.460.528€</div><div class="note">Συνολικά καθαρά έσοδα</div></div><div class="res-arrow d-flex align-items-center justify-content-center"><svg width="24" height="32" viewBox="0 0 24 32" fill="none" stroke="currentColor" stroke-width="1.500"><path d="M12 2 23 13l-3 3-8-8-8 8-3-3ZM12 16l11 11-3 3-8-8-8 8-3-3Z"/></svg></div></div>
</article>
<article class="stat-card">
  <div class="chart-head">
    <svg class="trend" viewBox="42 906 1414 302" preserveAspectRatio="none"><path class="grey" d="M70 1160 400 1158 600 1155 740 1148 815 1143 860 1148 950 1142 1020 1135 1080 1138 1150 1128 1210 1110 1250 1090 1310 1082 1345 1067 1390 1067 1405 1080 1420 1145"/><path class="gold" d="M370 1160 700 1158 900 1155 1000 1152 1060 1149 1080 1152 1150 1147 1200 1143 1250 1136 1300 1131 1330 1134 1370 1130 1390 1132 1410 1145 1422 1160"/></svg>
    <h2>Αριθμός Ταινιών ανα Χρόνο</h2>
    <svg width="50" height="48" viewBox="0 0 50 48" fill="none" stroke="#2e2e2e"><path d="M1.500 1.500h47v45h-47ZM11 1v46M39 1v46M11 24h28" stroke-width="3"/><path d="M6 1v46M44 1v46" stroke-width="9" stroke-dasharray="3 4"/></svg>
  </div>
</article>
</div>
</div>
</section>
</main>
</body>
</html>
